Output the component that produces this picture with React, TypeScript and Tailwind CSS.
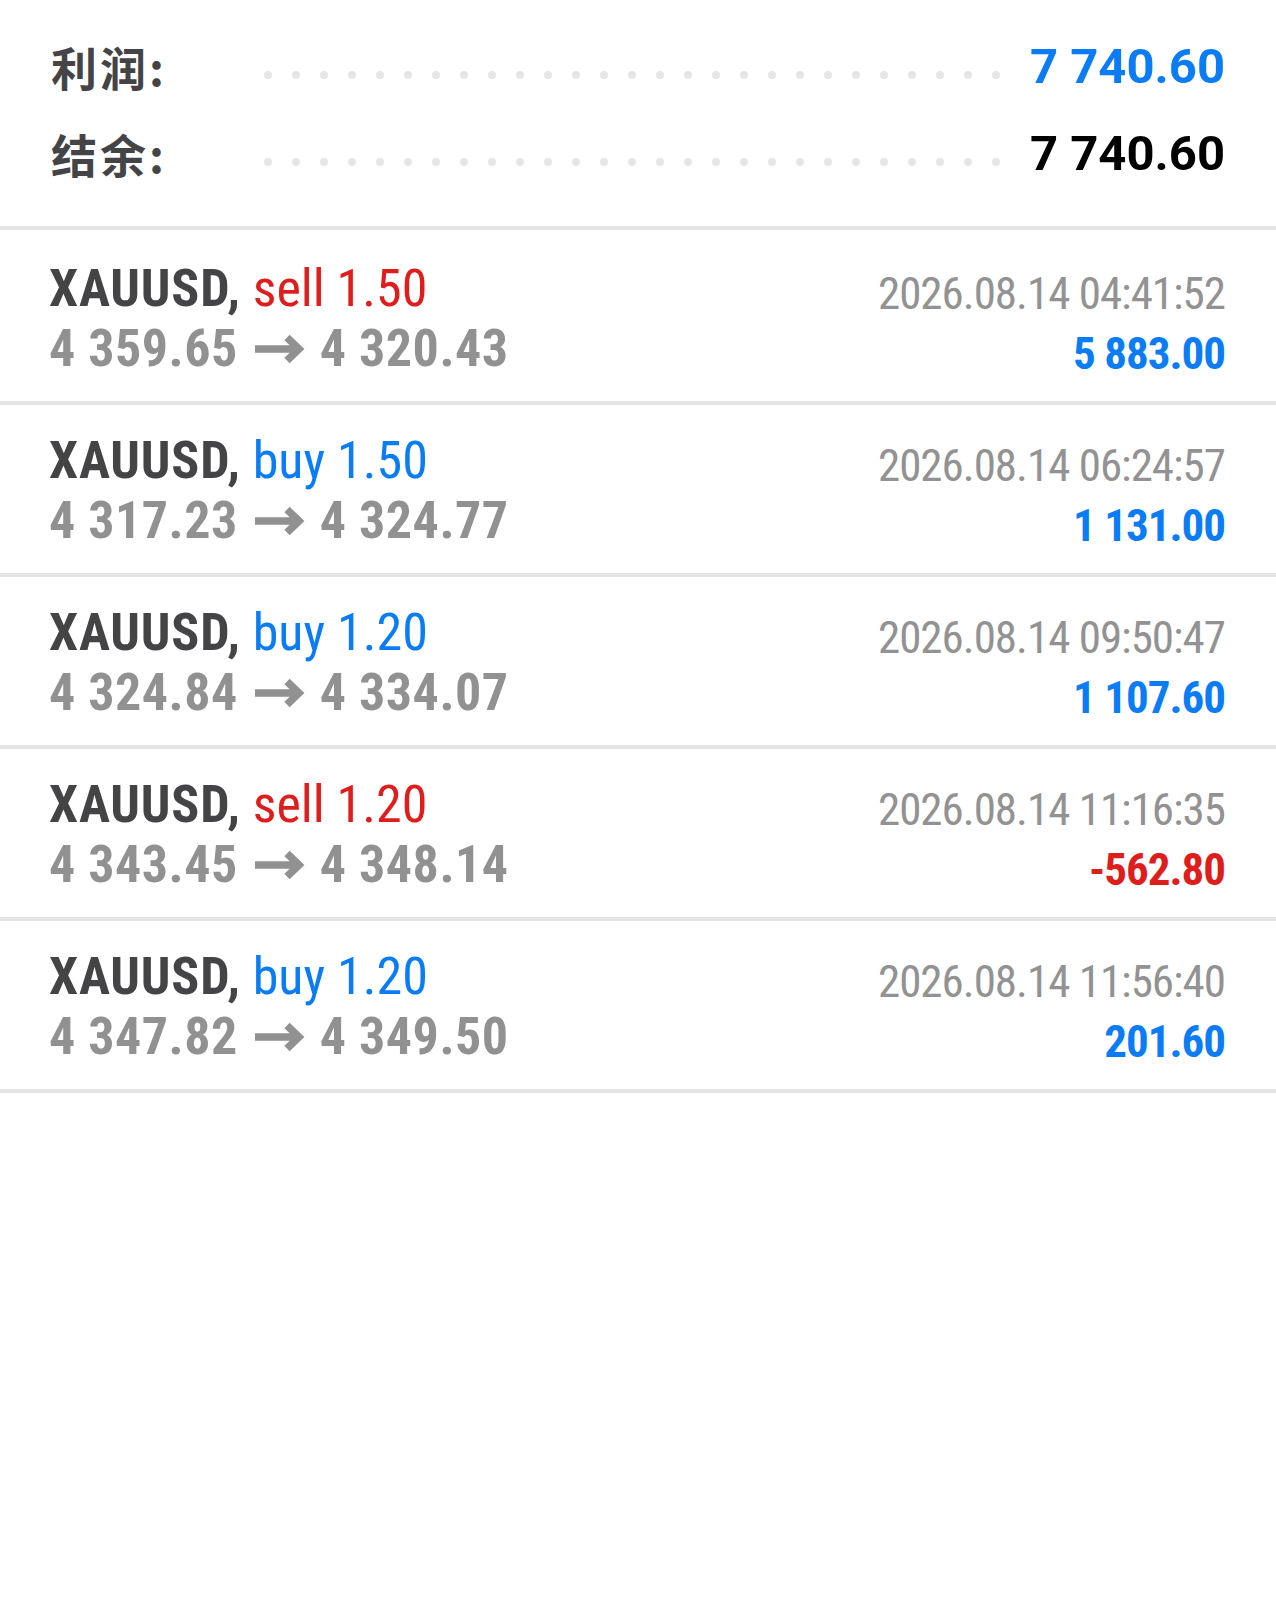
import React from "react";

type Deal = {
  side: "buy" | "sell";
  volume: string;
  open: string;
  close: string;
  time: string;
  profit: string;
};

const deals: Deal[] = [
  { side: "sell", volume: "1.50", open: "4 359.65", close: "4 320.43", time: "2026.08.14 04:41:52", profit: "5 883.00" },
  { side: "buy", volume: "1.50", open: "4 317.23", close: "4 324.77", time: "2026.08.14 06:24:57", profit: "1 131.00" },
  { side: "buy", volume: "1.20", open: "4 324.84", close: "4 334.07", time: "2026.08.14 09:50:47", profit: "1 107.60" },
  { side: "sell", volume: "1.20", open: "4 343.45", close: "4 348.14", time: "2026.08.14 11:16:35", profit: "-562.80" },
  { side: "buy", volume: "1.20", open: "4 347.82", close: "4 349.50", time: "2026.08.14 11:56:40", profit: "201.60" },
];

const condensed = "font-['Roboto_Condensed','Liberation_Sans_Narrow','DejaVu_Sans_Condensed',sans-serif]";

function Dots() {
  return (
    <div className="mt-[16px] flex gap-[20px]">
      {Array.from({ length: 27 }).map((_, i) => (
        <span key={i} className="size-[8px] rounded-full bg-[#e6e6e6]" />
      ))}
    </div>
  );
}

function Arrow() {
  return (
    <svg width="52" height="30" viewBox="0 0 52 30" className="mx-[15px] mb-[1px] inline-block">
      <path d="M2 15 H45 M34 3.5 L46 15 L34 26.5" fill="none" stroke="#919191" strokeWidth="7.5" strokeLinejoin="miter" />
    </svg>
  );
}

function SummaryRow({ label, value, valueClass }: { label: string; value: string; valueClass: string }) {
  return (
    <div className="flex h-[87px] items-center">
      <div className="w-[213px] font-['Noto_Sans_CJK_SC',sans-serif] text-[46px] font-bold tracking-[3px] text-[#444447]">
        {label}
      </div>
      <Dots />
      <div className="flex-1" />
      <div className={`font-['Roboto',sans-serif] text-[49px] font-bold leading-[87px] ${valueClass}`}>{value}</div>
    </div>
  );
}

function DealRow({ deal, first }: { deal: Deal; first: boolean }) {
  const sideColor = deal.side === "sell" ? "text-[#de1d1d]" : "text-[#0a7cf5]";
  const profitColor = deal.profit.startsWith("-") ? "text-[#de1d1d]" : "text-[#0a7cf5]";
  return (
    <div
      className={`flex justify-between border-b-4 border-[#e4e4e4] pl-[49px] pr-[51px] pb-[17px] ${
        first ? "pt-[29px]" : "pt-[26px]"
      } ${condensed}`}
    >
      <div className="text-[52px] leading-[60px]">
        <div>
          <span className="font-bold tracking-[0.8px] text-[#444447]">XAUUSD,</span>{" "}
          <span className={sideColor}>
            {deal.side} {deal.volume}
          </span>
        </div>
        <div className="flex items-center font-bold tracking-[0.5px] text-[#919191]">
          <span>{deal.open}</span>
          <Arrow />
          <span>{deal.close}</span>
        </div>
      </div>
      <div className="pt-[5px] text-right text-[45px] leading-[60px]">
        <div className="tracking-[-1px] text-[#929292]">{deal.time}</div>
        <div className={`font-bold tracking-[-1px] ${profitColor}`}>{deal.profit}</div>
      </div>
    </div>
  );
}

export default function App() {
  return (
    <div className="min-h-screen bg-white">
      <div className="border-b-4 border-[#e4e4e4] px-[51px] pt-[23px] pb-[29px]">
        <SummaryRow label="利润:" value="7 740.60" valueClass="text-[#0a7cf5]" />
        <SummaryRow label="结余:" value="7 740.60" valueClass="text-black" />
      </div>
      {deals.map((d, i) => (
        <DealRow key={i} deal={d} first={i === 0} />
      ))}
    </div>
  );
}
